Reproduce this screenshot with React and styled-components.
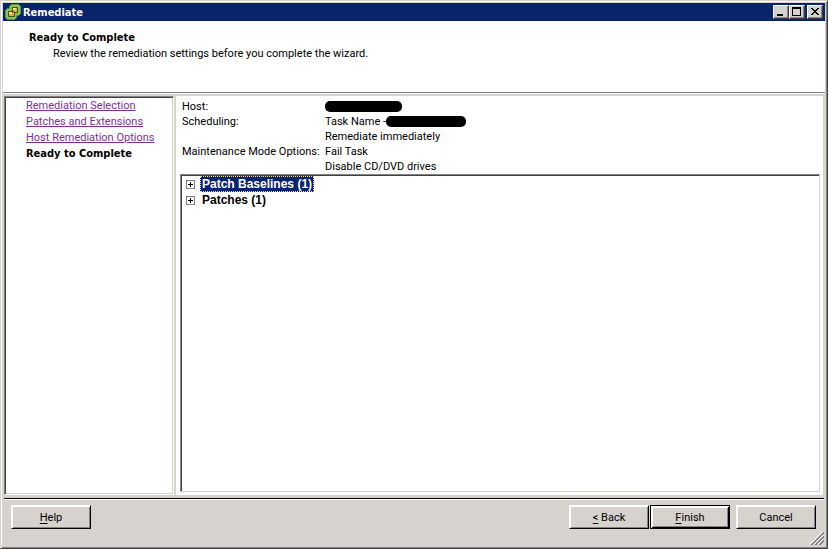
import React from "react";
import styled, { createGlobalStyle } from "styled-components";

const GlobalStyle = createGlobalStyle`
    *{
        box-sizing:border-box;
    }
    body{
        margin:0;
        background-color:#d6d3ce;
    }
    body, button{
        font-family:Roboto, sans-serif;
        font-size:11px;
        line-height:15px;
        color:#000;
    }
    h1, h2, b{
        font-family:"DejaVu Sans Condensed", "DejaVu Sans", sans-serif;
    }
`;

const Window = styled.div`
    display:flex;
    flex-direction:column;
    height:100vh;
    padding:1px 1px 0 0;
    background-color:#d6d3ce;
    border:1px solid #d6d3ce;
    border-right-color:#424142;
    border-bottom-color:#424142;
    box-shadow:inset 1px 1px 0 #fff, inset -1px -1px 0 #848284;
`;

const TitleBar = styled.header`
    display:flex;
    align-items:center;
    height:18px;
    margin:1px 1px 0 2px;
    padding:0 2px;
    background-color:#08246b;
    color:#fff;
`;

const WindowTitle = styled.h1`
    flex:1;
    margin:0 0 0 2px;
    font-size:11px;
    font-weight:700;
`;

const TitleButton = styled.button`
    display:flex;
    width:16px;
    height:14px;
    padding:0;
    margin-left:${props => props.gap || "0"};
    background-color:#d6d3ce;
    border:1px solid;
    border-color:#fff #424142 #424142 #fff;
    box-shadow:inset -1px -1px 0 #848284;
`;

const Banner = styled.section`
    height:72px;
    margin:0 1px 0 2px;
    padding:9px 26px 0;
    background-color:#fff;
    border-bottom:1px solid #848284;
    box-shadow:0 1px 0 #fff;
`;

const BannerTitle = styled.h2`
    margin:0;
    font-size:11px;
    line-height:16px;
    font-weight:700;
`;

const BannerText = styled.p`
    margin:0 0 0 24px;
    line-height:16px;
`;

const Body = styled.div`
    display:flex;
    flex:1;
    min-height:0;
    gap:2px;
    margin:3px;
`;

const Steps = styled.nav`
    flex:0 0 170px;
    padding-left:21px;
    background-color:#fff;
    border:1px solid;
    border-color:#848284 #fff #fff #848284;
    box-shadow:inset 1px 1px 0 #424142, inset -1px -1px 0 #d6d3ce;
`;

const StepList = styled.ol`
    margin:0;
    padding:1px 0 0;
    list-style:none;
    line-height:16px;
    white-space:nowrap;
`;

const StepLink = styled.a`
    color:#7b3494;
    text-decoration:underline;
`;

const Content = styled.main`
    display:flex;
    flex-direction:column;
    flex:1;
    min-width:0;
    padding:3px 3px 3px 4px;
    background-color:#fff;
`;

const Summary = styled.dl`
    display:grid;
    grid-template-columns:143px 1fr;
    margin:0 0 0 2px;

    dt, dd{
        margin:0;
        white-space:nowrap;
    }
    dd{
        grid-column:2;
    }
`;

const SummaryValue = styled.dd`
    display:flex;
    align-items:center;
    height:15px;
`;

const Redacted = styled.span`
    width:${props => props.width};
    height:11px;
    border-radius:5px;
    background-color:#000;
`;

const Tree = styled.ul`
    flex:1;
    margin:0;
    padding:1px 5px;
    list-style:none;
    border:1px solid;
    border-color:#848284 #d6d3ce #d6d3ce #848284;
    box-shadow:inset 1px 1px 0 #424142;
`;

const TreeItem = styled.li`
    display:flex;
    align-items:center;
    gap:5px;
    height:16px;
`;

const Expander = styled.button`
    display:flex;
    width:9px;
    height:9px;
    padding:0;
    border:1px solid #848284;
    background-color:#fff;
`;

const TreeLabel = styled.span`
    padding:0 1px;
    border:1px dotted ${props => props.selected ? "#f7db94" : "transparent"};
    background-color:${props => props.selected ? "#08246b" : "transparent"};
    color:${props => props.selected ? "#fff" : "#000"};
    font-family:"Liberation Sans", Arial, sans-serif;
    font-size:12px;
    line-height:14px;
    font-weight:700;
`;

const Footer = styled.footer`
    position:relative;
    display:flex;
    height:50px;
    margin:0 2px 0 3px;
    padding:6px 8px 0 7px;
    border-top:1px solid #000;
    box-shadow:inset 0 1px 0 #fff;
`;

const Spacer = styled.div`
    flex:1;
`;

const PushButton = styled.button`
    width:80px;
    height:24px;
    padding:0;
    margin-left:${props => props.gap || "0"};
    background-color:#d6d3ce;
    border:1px solid;
    border-color:${props => props.isDefault ? "#000" : "#fff #000 #000 #fff"};
    box-shadow:${props => props.isDefault
        ? "inset 1px 1px 0 #fff, inset -1px -1px 0 #000, inset 2px 2px 0 #fff, inset -2px -2px 0 #848284"
        : "inset 1px 1px 0 #fff, inset -1px -1px 0 #848284"};

    u{
        text-underline-offset:2px;
    }
`;

const Grip = styled.svg`
    position:absolute;
    right:0;
    bottom:3px;
`;

const Logo = () => (
    <svg width="16" height="16" viewBox="0 0 16 16" shapeRendering="crispEdges" aria-hidden="true">
        <path d="M6 0h8v1h1v1h1v8h-1v1h-1v1h-2v2h-1v1h-1v1H2v-1H1v-1H0V6h1V5h1V4h2V2h1V1h1z" fill="#5a9239" />
        <path d="M6 1h8v1h1v8h-1v1h-3v3h-1v1H2v-1H1V6h1V5h3V2h1z" fill="#8cc352" />
        <path d="M7 3h6v6h-3v4H3V7h4z" fill="#395918" />
        <path d="M8 4h4v4H8zM4 8h5v4H4z" fill="#e7a24a" />
        <path d="M8 4h3v2H8zM4 8h3v2H4z" fill="#ffdb8c" />
        <path d="M7 7h2v1H8v1H7z" fill="#634110" />
    </svg>
);

const Glyph = ({ d }) => (
    <svg width="14" height="12" viewBox="0 0 14 12" shapeRendering="crispEdges" aria-hidden="true">
        <path d={d} fill="#000" />
    </svg>
);

const steps = ["Remediation Selection", "Patches and Extensions", "Host Remediation Options"];

const groups = [
    { name: "Patch Baselines (1)", selected: true },
    { name: "Patches (1)", selected: false },
];

function App() {
    return (
        <Window>
            <GlobalStyle />
            <TitleBar>
                <Logo />
                <WindowTitle>Remediate</WindowTitle>
                <TitleButton aria-label="Minimize">
                    <Glyph d="M3 8h6v2H3z" />
                </TitleButton>
                <TitleButton aria-label="Maximize">
                    <Glyph d="M2 1h9v9H2zM3 3v6h7V3z" />
                </TitleButton>
                <TitleButton aria-label="Close" gap="2px">
                    <Glyph d="M3 2h2v1h1v1h2V3h1V2h2v1h-1v1H9v1H8v1h1v1h1v1h1v1H9V8H8V7H6v1H5v1H3V8h1V7h1V6h1V5H5V4H4V3H3z" />
                </TitleButton>
            </TitleBar>
            <Banner>
                <BannerTitle>Ready to Complete</BannerTitle>
                <BannerText>Review the remediation settings before you complete the wizard.</BannerText>
            </Banner>
            <Body>
                <Steps aria-label="Wizard steps">
                    <StepList>
                        {steps.map(step => (
                            <li key={step}>
                                <StepLink href="#">{step}</StepLink>
                            </li>
                        ))}
                        <li aria-current="step"><b>Ready to Complete</b></li>
                    </StepList>
                </Steps>
                <Content>
                    <Summary>
                        <dt>Host:</dt>
                        <SummaryValue><Redacted width="77px" /></SummaryValue>
                        <dt>Scheduling:</dt>
                        <SummaryValue>Task Name -<Redacted width="80px" /></SummaryValue>
                        <SummaryValue>Remediate immediately</SummaryValue>
                        <dt>Maintenance Mode Options:</dt>
                        <SummaryValue>Fail Task</SummaryValue>
                        <SummaryValue>Disable CD/DVD drives</SummaryValue>
                    </Summary>
                    <Tree>
                        {groups.map(group => (
                            <TreeItem key={group.name}>
                                <Expander aria-label={`Expand ${group.name}`}>
                                    <svg width="7" height="7" viewBox="0 0 7 7" shapeRendering="crispEdges">
                                        <path d="M1 3h2V1h1v2h2v1H4v2H3V4H1z" fill="#000" />
                                    </svg>
                                </Expander>
                                <TreeLabel selected={group.selected}>{group.name}</TreeLabel>
                            </TreeItem>
                        ))}
                    </Tree>
                </Content>
            </Body>
            <Footer>
                <PushButton><u>H</u>elp</PushButton>
                <Spacer />
                <PushButton><u>&lt;</u> Back</PushButton>
                <PushButton isDefault gap="1px"><u>F</u>inish</PushButton>
                <PushButton gap="6px">Cancel</PushButton>
                <Grip width="14" height="14" viewBox="0 0 14 14" aria-hidden="true">
                    <path d="M0 13L13 0M4 13L13 4M8 13L13 8" stroke="#fff" />
                    <path d="M1 14L14 1M2 14L14 2M5 14L14 5M6 14L14 6M9 14L14 9M10 14L14 10" stroke="#848284" />
                </Grip>
            </Footer>
        </Window>
    );
}

export default App;
